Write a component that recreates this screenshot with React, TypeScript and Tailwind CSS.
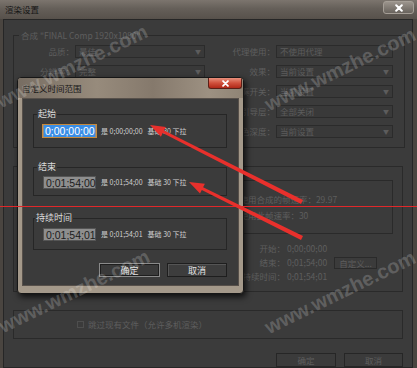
import React from "react";

function arrowPts(tx: number, ty: number, hx: number, hy: number) {
  const dx = hx - tx, dy = hy - ty, L = Math.hypot(dx, dy);
  const ux = dx / L, uy = dy / L, nx = -uy, ny = ux;
  const hl = 15, hw = 5.5, sw = 1.5, tw = 2.3;
  const bx = hx - ux * hl, by = hy - uy * hl;
  const p = [
    [tx + nx * tw, ty + ny * tw],
    [bx + nx * sw, by + ny * sw],
    [bx + nx * hw, by + ny * hw],
    [hx, hy],
    [bx - nx * hw, by - ny * hw],
    [bx - nx * sw, by - ny * sw],
    [tx - nx * tw, ty - ny * tw],
  ];
  return p.map((q) => q.map((v) => v.toFixed(1)).join(",")).join(" ");
}

function XMark({ size = 8 }: { size?: number }) {
  return (
    <svg width={size} height={size} viewBox="0 0 8 8">
      <path d="M1.2 1.2 L6.8 6.8 M6.8 1.2 L1.2 6.8" stroke="#ffffff" strokeWidth="2" strokeLinecap="round" />
    </svg>
  );
}

function DimSelect({ text, arrow = true, className }: { text: string; arrow?: boolean; className: string }) {
  return (
    <div className={"h-[13px] border border-[#2b2b2b] bg-[#393939] flex items-center justify-between pl-[3px] pr-[3px] " + className}>
      <span className="text-[8.5px] leading-[11px] text-[#5c5c5c] whitespace-nowrap">{text}</span>
      {arrow && <span className="text-[6px] leading-[8px] text-[#5c5c5c]">▼</span>}
    </div>
  );
}

function Watermark({ className }: { className: string }) {
  return (
    <span
      className={
        "absolute -translate-x-1/2 -translate-y-1/2 rotate-[-26deg] whitespace-nowrap font-['Liberation_Sans',sans-serif] font-bold text-[20px] leading-[20px] text-white/20 " +
        className
      }
    >
      www.wmzhe.com
    </span>
  );
}

export default function App() {
  const dim = "text-[#5e5e5e]";
  return (
    <div className="relative w-[417px] h-[368px] overflow-hidden bg-[#4a4540] font-['Noto_Sans_CJK_SC','Liberation_Sans',sans-serif]">
      {/* Outer title bar */}
      <div className="h-[19px] flex justify-between bg-[linear-gradient(180deg,#7c756e_0%,#655f59_45%,#57514b_100%)] pl-[5px] pr-[3px]">
        <span className="text-[8.5px] leading-[18px] text-[#151515]">渲染设置</span>
        <div className="mt-[1px] w-[31px] h-[13px] rounded-[3px] border border-[#a59e96] bg-[linear-gradient(180deg,#9b948c,#69635d)] flex items-center justify-center">
          <XMark size={8} />
        </div>
      </div>

      {/* Outer body */}
      <div className="ml-[3px] w-[410px] h-[349px] bg-[#3b3b3b] border border-[#262626] flex flex-col pl-[9px]">
        {/* Group 1 */}
        <fieldset className="mt-[10px] w-[392px] border border-[#2a2a2a] pb-[9px]">
          <legend className={"ml-[5px] px-[2px] text-[8.5px] leading-[10px] " + dim}>合成 "FINAL Comp 1920x1080"</legend>
          <div className="flex pt-[5px]">
            <div className="w-[195px] flex flex-col gap-[7px]">
              <div className="flex items-center">
                <span className={"w-[60px] text-right text-[8.5px] leading-[11px] " + dim}>品质：</span>
                <DimSelect text="最佳" className="ml-[1px] w-[130px]" />
              </div>
              <div className="flex items-center">
                <span className={"w-[60px] text-right text-[8.5px] leading-[11px] " + dim}>分辨率：</span>
                <DimSelect text="完整" className="ml-[1px] w-[130px]" />
              </div>
              <div className="flex items-center">
                <span className={"w-[60px] text-right text-[8.5px] leading-[11px] " + dim}>大小：</span>
                <DimSelect text="1920 x 1080" arrow={false} className="ml-[1px] w-[130px]" />
              </div>
            </div>
            <div className="flex flex-col gap-[7px]">
              <div className="flex items-center">
                <span className={"w-[66px] text-right text-[8.5px] leading-[11px] " + dim}>代理使用：</span>
                <DimSelect text="不使用代理" arrow={false} className="ml-[1px] w-[117px]" />
              </div>
              <div className="flex items-center">
                <span className={"w-[66px] text-right text-[8.5px] leading-[11px] " + dim}>效果：</span>
                <DimSelect text="当前设置" className="ml-[1px] w-[117px]" />
              </div>
              <div className="flex items-center">
                <span className={"w-[66px] text-right text-[8.5px] leading-[11px] " + dim}>独奏开关：</span>
                <DimSelect text="当前设置" className="ml-[1px] w-[117px]" />
              </div>
              <div className="flex items-center">
                <span className={"w-[66px] text-right text-[8.5px] leading-[11px] " + dim}>引导层：</span>
                <DimSelect text="全部关闭" className="ml-[1px] w-[117px]" />
              </div>
              <div className="flex items-center">
                <span className={"w-[66px] text-right text-[8.5px] leading-[11px] " + dim}>颜色深度：</span>
                <DimSelect text="当前设置" className="ml-[1px] w-[117px]" />
              </div>
            </div>
          </div>
        </fieldset>

        {/* Group 2 */}
        <div className="mt-[18px] w-[390px] border border-[#2a2a2a] pt-[13px] pb-[8px] flex flex-col">
          <div className="ml-[9px] w-[370px] h-[54px] border border-[#2a2a2a] flex flex-col justify-center gap-[4px] pl-[205px]">
            <span className={"text-[8.5px] leading-[12px] whitespace-nowrap " + dim}>○ 使用合成的帧速率：29.97</span>
            <span className={"text-[8.5px] leading-[12px] whitespace-nowrap " + dim}>○ 使用此帧速率：30</span>
          </div>
          <div className="mt-[8px] flex flex-col gap-[1px]">
            <div className="flex items-center h-[13px]">
              <span className={"w-[271px] text-right text-[8.5px] leading-[11px] " + dim}>开始：</span>
              <span className={"ml-[2px] text-[8.5px] leading-[11px] " + dim}>0;00;00;00</span>
            </div>
            <div className="flex items-center h-[13px]">
              <span className={"w-[271px] text-right text-[8.5px] leading-[11px] " + dim}>结束：</span>
              <span className={"ml-[2px] w-[44px] text-[8.5px] leading-[11px] " + dim}>0;01;54;00</span>
              <div className="ml-[3px] w-[43px] h-[12px] border border-[#2a2a2a] flex items-center justify-center">
                <span className={"text-[8.5px] leading-[10px] " + dim}>自定义...</span>
              </div>
            </div>
            <div className="flex items-center h-[13px]">
              <span className={"w-[271px] text-right text-[8.5px] leading-[11px] " + dim}>持续时间：</span>
              <span className={"ml-[2px] text-[8.5px] leading-[11px] " + dim}>0;01;54;01</span>
            </div>
          </div>
        </div>

        {/* Group 3 */}
        <div className="mt-[18px] w-[390px] h-[35px] border border-[#2a2a2a] flex items-center pl-[63px]">
          <span className="w-[7px] h-[7px] border border-[#4e4e4e]" />
          <span className={"ml-[4px] text-[8.5px] leading-[11px] " + dim}>跳过现有文件（允许多机渲染）</span>
        </div>

        {/* Bottom buttons */}
        <div className="mt-[14px] flex justify-end gap-[8px] pr-[9px]">
          <div className="w-[60px] h-[14px] border border-[#262626] flex justify-center">
            <span className={"text-[8.5px] leading-[12px] " + dim}>确定</span>
          </div>
          <div className="w-[59px] h-[14px] border border-[#262626] flex justify-center">
            <span className={"text-[8.5px] leading-[12px] " + dim}>取消</span>
          </div>
        </div>
      </div>

      {/* Modal dialog */}
      <div className="absolute left-[17px] top-[77px] w-[227px] h-[217px] rounded-[4px] border border-[#161616] bg-[#a4998a] shadow-[2px_3px_6px_rgba(0,0,0,0.75)] flex flex-col overflow-hidden">
        <div className="relative h-[20px] flex items-center pl-[4px] bg-[linear-gradient(90deg,#776d62_0%,#978b7c_35%,#85796c_60%,#9d9182_85%,#8f8475_100%)]">
          <span className="text-[8.5px] leading-[11px] text-[#161616]">自定义时间范围</span>
          <div className="absolute right-[1px] top-0 w-[34px] h-[11px] rounded-b-[3px] border border-t-0 border-[#5a2018] bg-[linear-gradient(180deg,#e8907c_0%,#d0503c_50%,#b02818_100%)] flex items-center justify-center">
            <XMark size={7} />
          </div>
        </div>
        <div className="mx-[4px] h-[188px] bg-[#3b3b3b] border border-[#57504a] flex flex-col pl-[10px] pr-[11px]">
          {/* 起始 */}
          <fieldset className="mt-[9px] border border-[#262626] pb-[9px]">
            <legend className="ml-[3px] px-[1px] text-[9px] leading-[12px] text-[#dadada]">起始</legend>
            <div className="flex items-center pt-[4px] pl-[8px]">
              <div className="w-[55px] h-[14px] border border-[#c58a3e] bg-[#8c8c8c] flex items-center px-[1px]">
                <span className="bg-[#3a8ee6] text-white text-[10.5px] leading-[12px] font-['Liberation_Sans',sans-serif] px-[1px] w-full">0;00;00;00</span>
              </div>
              <span className="ml-[4px] text-[7px] leading-[9px] text-[#d0d0d0] whitespace-nowrap">是 0;00;00;00</span>
              <span className="ml-[5px] text-[7px] leading-[9px] text-[#d0d0d0] whitespace-nowrap">基础 30 下拉</span>
            </div>
          </fieldset>
          {/* 结束 */}
          <fieldset className="mt-[13px] border border-[#262626] pb-[6px]">
            <legend className="ml-[3px] px-[1px] text-[9px] leading-[12px] text-[#dadada]">结束</legend>
            <div className="flex items-center pt-[3px] pl-[9px]">
              <div className="w-[53px] h-[13px] border border-[#555555] bg-[#8e8e8e] flex items-center px-[2px]">
                <span className="text-[#1c1c1c] text-[10.5px] leading-[12px] font-['Liberation_Sans',sans-serif]">0;01;54;00</span>
              </div>
              <span className="ml-[5px] text-[7px] leading-[9px] text-[#d0d0d0] whitespace-nowrap">是 0;01;54;00</span>
              <span className="ml-[5px] text-[7px] leading-[9px] text-[#d0d0d0] whitespace-nowrap">基础 30 下拉</span>
            </div>
          </fieldset>
          {/* 持续时间 */}
          <fieldset className="mt-[16px] border border-[#262626] pb-[8px]">
            <legend className="ml-[1px] px-[1px] text-[9px] leading-[12px] text-[#dadada]">持续时间</legend>
            <div className="flex items-center pt-[4px] pl-[9px]">
              <div className="w-[53px] h-[13px] border border-[#555555] bg-[#8e8e8e] flex items-center px-[2px]">
                <span className="text-[#1c1c1c] text-[10.5px] leading-[12px] font-['Liberation_Sans',sans-serif]">0;01;54;01</span>
              </div>
              <span className="ml-[5px] text-[7px] leading-[9px] text-[#d0d0d0] whitespace-nowrap">是 0;01;54;01</span>
              <span className="ml-[5px] text-[7px] leading-[9px] text-[#d0d0d0] whitespace-nowrap">基础 30 下拉</span>
            </div>
          </fieldset>
          {/* Buttons */}
          <div className="mt-[13px] flex justify-end gap-[7px]">
            <div className="w-[61px] h-[14px] border border-[#8a8a8a] bg-[#3a3a3a] shadow-[inset_0_0_0_1px_#1e1e1e] flex items-center justify-center">
              <span className="text-[9px] leading-[11px] text-[#e2e2e2]">确定</span>
            </div>
            <div className="w-[60px] h-[14px] border border-[#1e1e1e] bg-[#3d3d3d] shadow-[inset_1px_1px_0_#555555] flex items-center justify-center">
              <span className="text-[9px] leading-[11px] text-[#e2e2e2]">取消</span>
            </div>
          </div>
        </div>
      </div>

      {/* Watermarks */}
      <Watermark className="left-[72px] top-[66px]" />
      <Watermark className="left-[340px] top-[69px]" />
      <Watermark className="left-[74px] top-[291px]" />
      <Watermark className="left-[340px] top-[292px]" />

      {/* Red annotation overlay */}
      <div className="absolute left-0 top-[206px] w-[417px] h-[1px] bg-[#e1282a]" />
      <svg className="absolute left-0 top-0 pointer-events-none" width="417" height="368" viewBox="0 0 417 368">
        <polygon points={arrowPts(302, 202, 150, 125)} fill="#e8302c" />
        <polygon points={arrowPts(302, 238, 189, 182)} fill="#e8302c" />
      </svg>
    </div>
  );
}
